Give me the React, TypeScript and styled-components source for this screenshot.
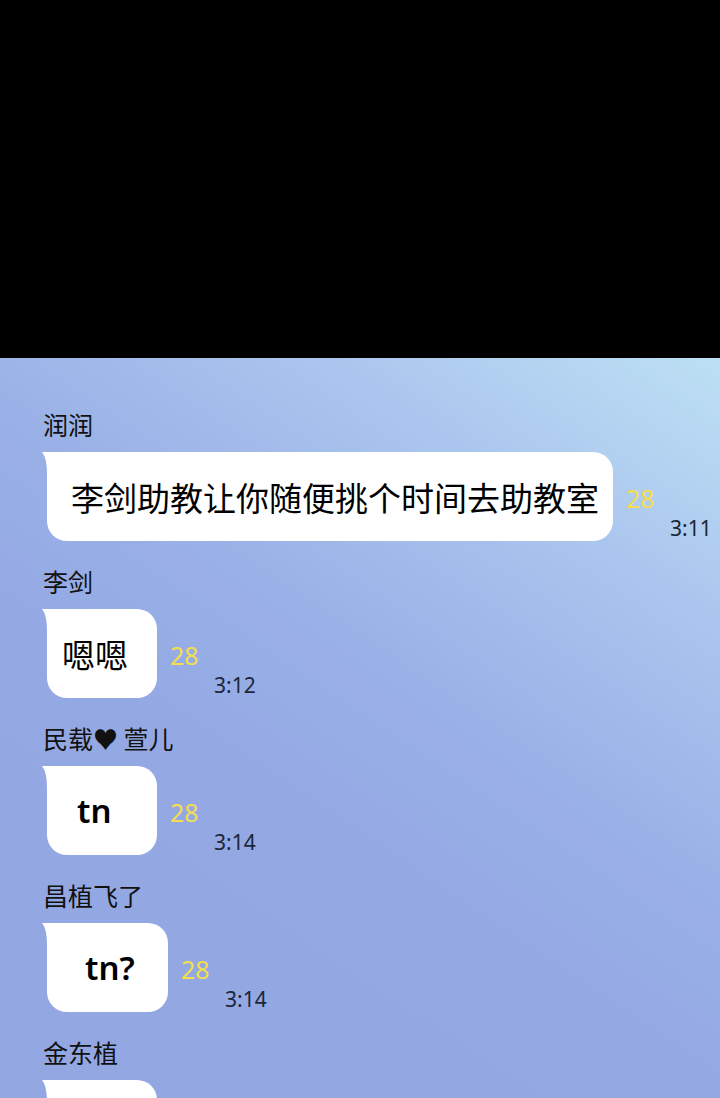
import React from 'react';
import styled, { createGlobalStyle } from 'styled-components';

interface Message {
    id: number;
    name: string;
    text: string;
    width: number;
    padLeft: number;
    bold?: boolean;
    unread?: string;
    time?: string;
}

const messages: Message[] = [
    { id: 1, name: '润润', text: '李剑助教让你随便挑个时间去助教室', width: 566, padLeft: 24, unread: '28', time: '3:11' },
    { id: 2, name: '李剑', text: '嗯嗯', width: 110, padLeft: 15, unread: '28', time: '3:12' },
    { id: 3, name: '民载♥ 萱儿', text: 'tn', width: 110, padLeft: 30, bold: true, unread: '28', time: '3:14' },
    { id: 4, name: '昌植飞了', text: 'tn?', width: 121, padLeft: 38, bold: true, unread: '28', time: '3:14' },
    { id: 5, name: '金东植', text: '', width: 110, padLeft: 20 },
];

const GlobalStyle = createGlobalStyle`
  html, body {
    margin: 0;
    padding: 0;
    background: #000;
  }
  body {
    font-family: "Noto Sans", "Noto Sans CJK SC", sans-serif;
  }
`;

const Screen = styled.div`
  width: 720px;
  height: 1098px;
  overflow: hidden;
  display: flex;
  flex-direction: column;
`;

const TopBar = styled.div`
  height: 358px;
  flex-shrink: 0;
  background: #000;
`;

const ChatArea = styled.div`
  flex: 1;
  padding: 50px 0 0 43px;
  background: linear-gradient(214deg, #bde0f4 0%, #abc6ee 20%, #9ab1e7 40%, #94a9e4 56%, #92a7e2 100%);
  display: flex;
  flex-direction: column;
`;

const Item = styled.div`
  display: flex;
  flex-direction: column;
  margin-bottom: 24px;
`;

const Name = styled.div`
  font-family: "Noto Sans CJK SC", "Noto Sans", sans-serif;
  font-size: 25px;
  line-height: 33px;
  color: #111;
  margin-bottom: 11px;
`;

const Row = styled.div`
  display: flex;
  align-items: flex-end;
  padding-left: 4px;
`;

const Bubble = styled.div<{ $width: number; $padLeft: number; $bold?: boolean }>`
  position: relative;
  box-sizing: border-box;
  width: ${p => p.$width}px;
  height: 89px;
  padding-left: ${p => p.$padLeft}px;
  background: #fff;
  border-radius: 0 20px 20px 20px;
  display: flex;
  align-items: center;
  font-family: "Noto Sans", "Noto Sans CJK SC", sans-serif;
  font-size: 33px;
  font-weight: ${p => (p.$bold ? 600 : 400)};
  color: #000;
  white-space: nowrap;
`;

const Tail = styled.svg`
  position: absolute;
  left: -5px;
  top: 0;
  width: 16px;
  height: 22px;
`;

const Meta = styled.div`
  display: flex;
  flex-direction: column;
  margin-left: 13px;
`;

const Unread = styled.div`
  font-size: 25px;
  line-height: 30px;
  color: #f4de4e;
  margin-bottom: 2px;
`;

const Time = styled.div`
  font-size: 21px;
  line-height: 26px;
  color: #1b2638;
  margin-left: 44px;
`;

const ChatItem = ({ msg }: { msg: Message }) => {
    return (
        <Item>
            <Name>{msg.name}</Name>
            <Row>
                <Bubble $width={msg.width} $padLeft={msg.padLeft} $bold={msg.bold}>
                    <Tail viewBox="0 0 16 22">
                        <path d="M0 0 H16 V22 H5 Q5 6 0 0 Z" fill="#fff" />
                    </Tail>
                    {msg.text}
                </Bubble>
                {msg.time && (
                    <Meta>
                        <Unread>{msg.unread}</Unread>
                        <Time>{msg.time}</Time>
                    </Meta>
                )}
            </Row>
        </Item>
    );
};

const App = () => {
    return (
        <Screen>
            <GlobalStyle />
            <TopBar />
            <ChatArea>
                {messages.map(msg => (
                    <ChatItem msg={msg} key={msg.id} />
                ))}
            </ChatArea>
        </Screen>
    );
};

export default App;
